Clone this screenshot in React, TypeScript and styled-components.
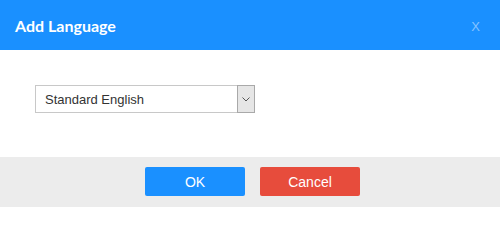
import React from "react";
import styled, { createGlobalStyle } from "styled-components";

const Global = createGlobalStyle`
  html, body { margin: 0; padding: 0; background: #ffffff; }
  * { box-sizing: border-box; }
`;

const Dialog = styled.div`
  width: 500px;
  height: 207px;
  display: flex;
  flex-direction: column;
  background: #ffffff;
  font-family: "Liberation Sans", Arial, sans-serif;
`;

const Header = styled.div`
  height: 50px;
  flex: none;
  background: #1a90ff;
  display: flex;
  align-items: center;
  justify-content: space-between;
  padding: 0 20px 0 15px;
`;

const Title = styled.h3`
  margin: 0;
  font-family: Lato, "Noto Sans", sans-serif;
  font-weight: bold;
  font-size: 16px;
  color: #ffffff;
`;

const Close = styled.span`
  font-family: "Liberation Sans", Arial, sans-serif;
  font-size: 13px;
  color: #86c3ff;
  margin-top: 2px;
  cursor: pointer;
`;

const Body = styled.div`
  flex: 1;
  padding: 35px 35px 0;
`;

const SelectBox = styled.div`
  width: 220px;
  height: 28px;
  display: flex;
  border: 1px solid #c8c8c8;
  background: #fff;
`;

const SelectText = styled.div`
  flex: 1;
  display: flex;
  align-items: center;
  padding-left: 9px;
  font-size: 13px;
  color: #333;
`;

const ArrowBox = styled.div`
  width: 18px;
  margin: -1px -1px -1px 0;
  background: #e6e6e6;
  border: 1px solid #a9a9a9;
  display: flex;
  align-items: center;
  justify-content: center;
`;

const Footer = styled.div`
  height: 50px;
  flex: none;
  background: #ececec;
  display: flex;
  justify-content: center;
  align-items: flex-start;
  gap: 15px;
  padding: 10px 0 0 5px;
`;

const Button = styled.button<{ $variant: "ok" | "cancel" }>`
  width: 100px;
  height: 29px;
  border: none;
  border-radius: 2px;
  background: ${(p) => (p.$variant === "ok" ? "#1a90ff" : "#e74c3c")};
  color: #ffffff;
  font-family: "Liberation Sans", Arial, sans-serif;
  font-size: 14px;
  padding: 0;
  cursor: pointer;
`;

export default function App() {
  return (
    <>
      <Global />
      <Dialog>
        <Header>
          <Title>Add Language</Title>
          <Close>X</Close>
        </Header>
        <Body>
          <SelectBox>
            <SelectText>Standard English</SelectText>
            <ArrowBox>
              <svg width="8" height="5" viewBox="0 0 8 5">
                <path d="M0.5 0.5 L4 4 L7.5 0.5" fill="none" stroke="#555" strokeWidth="1" />
              </svg>
            </ArrowBox>
          </SelectBox>
        </Body>
        <Footer>
          <Button $variant="ok">OK</Button>
          <Button $variant="cancel">Cancel</Button>
        </Footer>
      </Dialog>
    </>
  );
}
